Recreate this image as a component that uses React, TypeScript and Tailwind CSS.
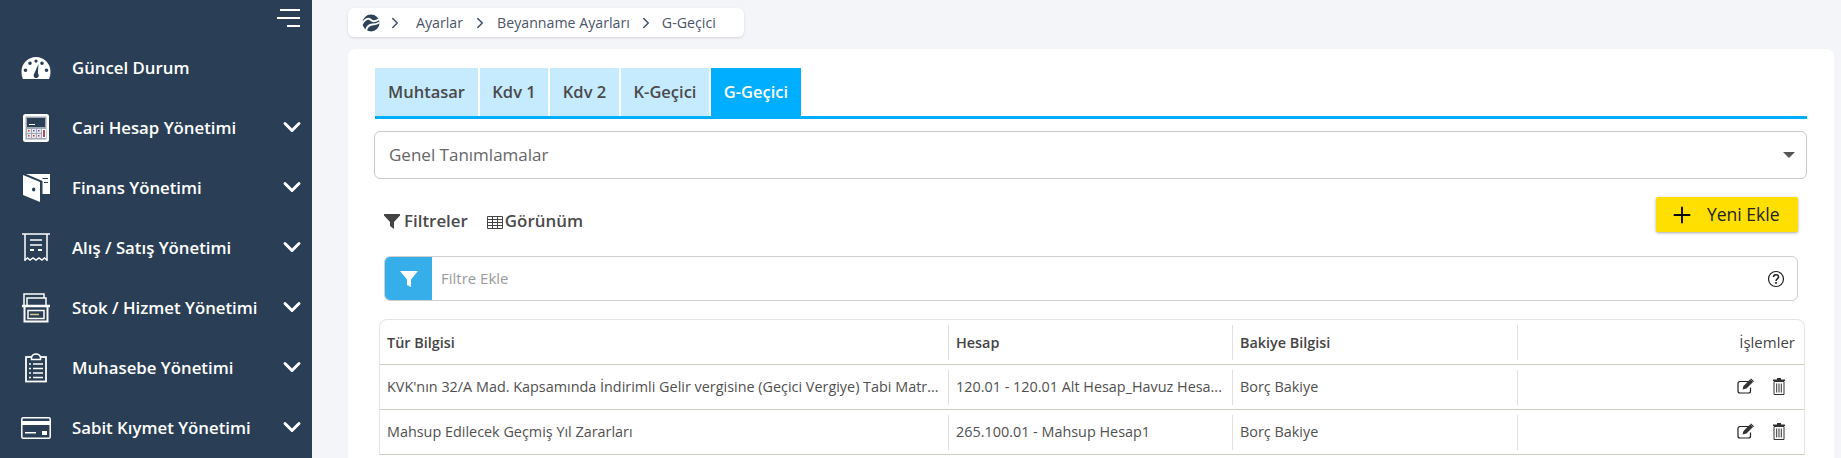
import { ChevronDown, ChevronRight, Plus } from "lucide-react";
import type { ReactNode } from "react";

const font = { fontFamily: '"Open Sans", sans-serif' };

function GaugeIcon() {
  return (
    <svg width="30" height="24" viewBox="0 0 30 24">
      <path fill="#fff" fillRule="evenodd" d="M15 1C7 1 .5 7.500.5 15.500c0 3 .7 5.500 1.500 7.500h26c.8-2 1.500-4.500 1.500-7.500C29.500 7.500 23 1 15 1zM9 5.500a1.800 1.800 0 1 1 0 3.600 1.800 1.800 0 0 1 0-3.600zm-4.500 7a1.800 1.800 0 1 1 0 3.600 1.800 1.800 0 0 1 0-3.600zm21 0a1.800 1.800 0 1 1 0 3.600 1.800 1.800 0 0 1 0-3.600zm-4.500-7a1.800 1.800 0 1 1 0 3.600 1.800 1.800 0 0 1 0-3.600zM15 3.500a1.600 1.600 0 1 1 0 3.200 1.600 1.600 0 0 1 0-3.200zM17.500 8l-.6 9.500a2.600 2.600 0 1 1-4.300 1.500z" />
    </svg>
  );
}

function CalcIcon() {
  return (
    <svg width="28" height="30" viewBox="0 0 28 30">
      <rect x="1" y="1" width="26" height="28" rx="2.500" fill="#fff" />
      <rect x="3.500" y="3.500" width="21" height="23" fill="#9fa7b0" />
      <rect x="5" y="5" width="18" height="9" fill="#2a3f56" />
      <rect x="7" y="11" width="6" height="1" fill="#fff" />
      {[5, 10, 15].map((x) => (
        <g key={x}>
          <rect x={x} y="16" width="4" height="4" fill="#e8e8ef" />
          <rect x={x} y="21" width="4" height="4" fill="#e8e8ef" />
          <rect x={x + 1} y="17" width="1.500" height="1.500" fill={x === 5 ? "#c0392b" : "#6a4fa3"} />
          <rect x={x + 1} y="22" width="1.500" height="1.500" fill={x === 15 ? "#a23fa0" : "#c0392b"} />
        </g>
      ))}
      <rect x="20" y="16" width="4" height="9" fill="#fff" />
      <rect x="21" y="17" width="2" height="7" fill="#b5485a" />
    </svg>
  );
}

function WalletIcon() {
  return (
    <svg width="28" height="30" viewBox="0 0 28 30">
      <path fill="#fff" d="M1 2l17 7v20L1 22zM4 1h24v20h-7.500V8z" />
      <path fill="#2a3f56" d="M10 16.500a1.700 2 0 1 0 3.400 0 1.700 2 0 0 0-3.400 0zM20.500 5H26v1h-5.500zM22 9h4v1h-4z" />
    </svg>
  );
}

function ReceiptIcon() {
  return (
    <svg width="28" height="30" viewBox="0 0 28 30" fill="none" stroke="#fff">
      <path strokeWidth="1.500" d="M0 1h28M3 1v27M25 1v27" />
      <path strokeWidth="1.500" d="M3 27l2.500-2 2.500 2 3-2 3 2 3-2 3 2 2.500-2 2.500 2" />
      <path strokeWidth="1.500" d="M8 7h12M8 12h12" />
      <path strokeWidth="2" d="M8 17h4M16 17h4" />
    </svg>
  );
}

function BoxIcon() {
  return (
    <svg width="28" height="30" viewBox="0 0 28 30" fill="none" stroke="#fff">
      <path strokeWidth="1.500" d="M2 12V1h20v4M5 12V5h19v7" />
      <path strokeWidth="2.500" d="M0 13h28" />
      <path strokeWidth="2" d="M2.500 14v14.500h23V14" />
      <rect x="6" y="17.500" width="16" height="8" strokeWidth="1.500" />
      <path strokeWidth="1.500" stroke="#d8c98a" d="M8 21.500h9" />
    </svg>
  );
}

function ClipboardIcon() {
  return (
    <svg width="24" height="30" viewBox="0 0 24 30" fill="none" stroke="#fff">
      <rect x="2" y="4" width="20" height="24.500" strokeWidth="1.800" />
      <path strokeWidth="1.500" fill="#2a3f56" d="M7.500 6.500V4C8 2.500 9.500 1 12 1s4 1.500 4.500 3v2.500z" />
      <path strokeWidth="1.500" d="M5 11h2M9 11h10M5 15.500h2M9 15.500h10M5 20h2M9 20h10M5 24.500h2M9 24.500h10" />
    </svg>
  );
}

function CardIcon() {
  return (
    <svg width="30" height="22" viewBox="0 0 30 22">
      <rect x=".8" y=".8" width="28.400" height="20.400" rx="1.500" fill="none" stroke="#fff" strokeWidth="1.500" />
      <rect x="1" y="4" width="28" height="4" fill="#fff" />
      <rect x="4" y="15" width="11" height="1.500" fill="#fff" />
      <rect x="21" y="14" width="5" height="4" fill="#fff" />
    </svg>
  );
}

function BrandLogo() {
  return (
    <svg width="18" height="18" viewBox="0 0 18 18">
      <circle cx="9" cy="9" r="8.500" fill="#2f4358" />
      <path fill="none" stroke="#fff" strokeWidth="2" d="M0 10C3 5 6.500 3.500 9 6c1.500 1.500 4 2 8.500-1" />
      <path fill="none" stroke="#fff" strokeWidth="2" d="M4 17.500c0-4 3-7 6.500-7 2.500 0 4.500-.5 7-2" />
    </svg>
  );
}

function EditIcon() {
  return (
    <svg width="18" height="16" viewBox="0 0 18 16" fill="none">
      <path stroke="#222" strokeWidth="1.200" d="M12 3.500H3A2 2 0 0 0 1 5.500v7.500a2 2 0 0 0 2 2h8.500a2 2 0 0 0 2-2V9.500" />
      <path fill="#333" d="M5.500 11.500l1-3.500L13 1.500l3 2.500-6.500 6.500z" />
      <path fill="#222" d="M14 .5l3 2.800-.8.800-3-2.800z" />
    </svg>
  );
}

function TrashIcon() {
  return (
    <svg width="12" height="17" viewBox="0 0 12 17" fill="none" stroke="#333">
      <path fill="#333" stroke="none" d="M4 0h4v1.500h4V3H0V1.500h4z" />
      <path strokeWidth="1" d="M1 3.500h10v13H1zM3.700 5.500v9M6 5.500v9M8.300 5.500v9" />
    </svg>
  );
}

const navItems: { label: string; icon: ReactNode; sub: boolean }[] = [
  { label: "Güncel Durum", icon: <GaugeIcon />, sub: false },
  { label: "Cari Hesap Yönetimi", icon: <CalcIcon />, sub: true },
  { label: "Finans Yönetimi", icon: <WalletIcon />, sub: true },
  { label: "Alış / Satış Yönetimi", icon: <ReceiptIcon />, sub: true },
  { label: "Stok / Hizmet Yönetimi", icon: <BoxIcon />, sub: true },
  { label: "Muhasebe Yönetimi", icon: <ClipboardIcon />, sub: true },
  { label: "Sabit Kıymet Yönetimi", icon: <CardIcon />, sub: true },
];

const tabs = [
  { label: "Muhtasar", w: "w-[103px]" },
  { label: "Kdv 1", w: "w-[68px]" },
  { label: "Kdv 2", w: "w-[69px]" },
  { label: "K-Geçici", w: "w-[88px]" },
];

const rows = [
  ["KVK'nın 32/A Mad. Kapsamında İndirimli Gelir vergisine (Geçici Vergiye) Tabi Matr...", "120.01 - 120.01 Alt Hesap_Havuz Hesa...", "Borç Bakiye"],
  ["Mahsup Edilecek Geçmiş Yıl Zararları", "265.100.01 - Mahsup Hesap1", "Borç Bakiye"],
];

const gridCols = "grid grid-cols-[569px_284px_285px_1fr]";

function Cell({ children, head }: { children?: ReactNode; head?: boolean }) {
  return (
    <div className={"flex h-[35px] items-center truncate border-r border-[#e0e0e0] px-[7px] " + (head ? "font-semibold text-[#444]" : "")}>
      <span className="truncate">{children}</span>
    </div>
  );
}

export default function App() {
  return (
    <div className="flex h-[458px] overflow-hidden bg-[#f3f5f9]" style={font}>
      {/* Sidebar */}
      <aside className="w-[312px] shrink-0 bg-[#2a3f56] text-white">
        <div className="flex h-[38px] flex-col items-end gap-[6px] pt-[9px] pr-[12px]">
          <span className="h-[2px] w-[20px] bg-white" />
          <span className="h-[2px] w-[23px] bg-white" />
          <span className="h-[2px] w-[13px] bg-white" />
        </div>
        <nav>
          {navItems.map((item) => (
            <div key={item.label} className="flex h-[60px] items-center">
              <span className="flex w-[72px] shrink-0 justify-center pr-[1px]">{item.icon}</span>
              <span className="flex-1 text-[16.8px] font-semibold">{item.label}</span>
              {item.sub && <ChevronDown size={28} strokeWidth={2.500} className="mr-[6px] mb-[2px]" />}
            </div>
          ))}
        </nav>
      </aside>

      {/* Content */}
      <main className="min-w-0 flex-1 pt-[8px] pr-[7px] pl-[36px]">
        <div className="flex h-[29px] w-[396px] items-center rounded-md bg-white pl-[14px] text-[14.2px] text-[#4a5568] shadow-sm">
          <BrandLogo />
          <ChevronRight size={18} className="ml-[6px] text-[#3f5068]" />
          <span className="ml-[12px]">Ayarlar</span>
          <ChevronRight size={18} className="ml-[8px] text-[#3f5068]" />
          <span className="ml-[8px]">Beyanname Ayarları</span>
          <ChevronRight size={18} className="ml-[7px] text-[#3f5068]" />
          <span className="ml-[7px]">G-Geçici</span>
        </div>

        <div className="mt-[12px] h-[500px] rounded-t-lg bg-white pt-[19px] pr-[27px] pl-[27px]">
          {/* Tabs */}
          <div className="flex h-[51px] items-start gap-[2px] border-b-[3px] border-[#00aeff]">
            {tabs.map((t) => (
              <div key={t.label} className={"flex h-[48px] items-center justify-center bg-[#c6ebff] text-[16.5px] font-semibold text-[#4a4a4a] " + t.w}>
                {t.label}
              </div>
            ))}
            <div className="flex h-[48px] w-[90px] items-center justify-center bg-[#00aeff] text-[16.5px] font-semibold text-white">
              G-Geçici
            </div>
          </div>

          {/* Select */}
          <div className="mt-[12px] -ml-px flex h-[48px] items-center justify-between rounded-md border border-[#c9c9c9] pr-[11px] pl-[14px] text-[17px] text-[#666]">
            <span>Genel Tanımlamalar</span>
            <span className="h-0 w-0 border-x-[6px] border-t-[6px] border-x-transparent border-t-[#555]" />
          </div>

          {/* Toolbar */}
          <div className="mt-[18px] flex h-[35px] items-start justify-between pr-[9px] pl-[9px]">
            <div className="flex items-center pt-[11px] text-[16.9px] font-semibold text-[#4a4a4a]">
              <svg width="16" height="16" viewBox="0 0 16 16" className="mt-[1px]">
                <path fill="#444" d="M0 1h16v1.500L10 9v7l-4-3V9L0 2.500z" />
              </svg>
              <span className="ml-[4px]">Filtreler</span>
              <svg width="16" height="14" viewBox="0 0 16 14" fill="none" stroke="#444" strokeWidth="1" className="mt-[2px] ml-[19px]">
                <path d="M.5 1.500h15v12H.5zM.5 4.500h15M.5 7.500h15M.5 10.500h15M5.500 1.500v12M10.500 1.500v12" />
              </svg>
              <span className="ml-[2px]">Görünüm</span>
            </div>
            <button className="flex h-[35px] w-[142px] items-center rounded-[2px] bg-[#ffdf00] pl-[13px] text-[17.5px] text-[#222] shadow-[0_1px_3px_rgba(0,0,0,0.35)]">
              <Plus size={26} strokeWidth={1.700} className="text-black" />
              <span className="ml-[12px]">Yeni Ekle</span>
            </button>
          </div>

          {/* Filter input */}
          <div className="mx-[9px] mt-[24px] flex h-[45px] items-center overflow-hidden rounded-md border border-[#cfcfcf] text-[15px]">
            <div className="flex h-full w-[47px] items-center justify-center bg-[#35aeea]">
              <svg width="18" height="18" viewBox="0 0 18 18">
                <path fill="#fff" d="M0 1h18L11 9.500V17l-4-2V9.500z" />
              </svg>
            </div>
            <span className="ml-[9px] flex-1 text-[#9a9a9a]">Filtre Ekle</span>
            <svg width="18" height="18" viewBox="0 0 18 18" className="mr-[12px]" fill="none" stroke="#222">
              <circle cx="9" cy="9" r="7.500" strokeWidth="1.200" />
              <path strokeWidth="1.500" d="M6.500 7C6.500 5.500 7.700 4.700 9 4.700s2.500.8 2.500 2.200c0 2-2.500 1.800-2.500 4" />
              <path strokeWidth="1.700" d="M9 12v1.700" />
            </svg>
          </div>

          {/* Table */}
          <div className="mx-[4px] mt-[18px] w-[1426px] rounded-t-lg border-x border-t border-[#e4e4e4] text-[14.4px] text-[#505050]">
            <div className={gridCols + " h-[45px] items-center border-b border-[#cfcbc0] pt-[1px]"}>
              <Cell head>Tür Bilgisi</Cell>
              <Cell head>Hesap</Cell>
              <Cell head>Bakiye Bilgisi</Cell>
              <div className="pr-[9px] text-right text-[15px] font-medium text-[#444]">İşlemler</div>
            </div>
            {rows.map((r) => (
              <div key={r[1]} className={gridCols + " h-[45px] items-center border-b border-[#cfcbc0]"}>
                <Cell>{r[0]}</Cell>
                <Cell>{r[1]}</Cell>
                <Cell>{r[2]}</Cell>
                <div className="mb-[2px] flex items-center justify-end gap-[18px] pr-[19px]">
                  <EditIcon />
                  <TrashIcon />
                </div>
              </div>
            ))}
          </div>
        </div>
      </main>
    </div>
  );
}
